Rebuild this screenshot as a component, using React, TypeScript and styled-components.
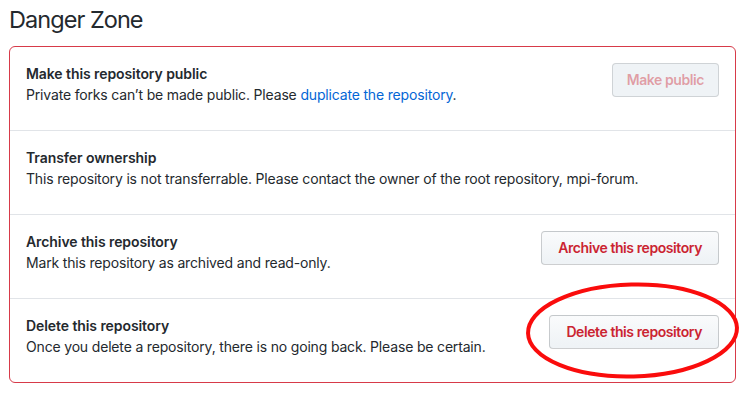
import React from "react";
import styled, { createGlobalStyle } from "styled-components";

const Global = createGlobalStyle`
  html, body { margin: 0; padding: 0; background: #fff; }
  body {
    font-family: Inter, "Liberation Sans", Arial, sans-serif;
    font-size: 14px;
    line-height: 1.5;
    color: #24292e;
  }
`;

const Page = styled.div`
  position: relative;
  width: 745px;
  height: 399px;
  box-sizing: border-box;
  padding: 5px 9px 0 9px;
  display: flex;
  flex-direction: column;
`;

const Heading = styled.h2`
  margin: 0 0 11px 0;
  font-size: 23.5px;
  line-height: 30px;
  font-weight: 400;
  letter-spacing: -0.95px;
  color: #24292e;
`;

const Box = styled.div`
  width: 727px;
  box-sizing: border-box;
  border: 1px solid #d73a49;
  border-radius: 6px;
  background: #fff;
`;

const Row = styled.div`
  display: flex;
  align-items: flex-start;
  padding: 16px 16px 15px 16px;
  & + & { border-top: 1px solid #e1e4e8; }
`;

const Info = styled.div`
  flex: 1 1 auto;
`;

const Title = styled.strong`
  display: block;
  font-weight: 600;
  line-height: 21px;
  letter-spacing: -0.08px;
`;

const Desc = styled.p`
  margin: 0 0 10px 0;
  line-height: 21px;
  letter-spacing: -0.17px;
`;

const Link = styled.a`
  color: #0366d6;
  text-decoration: none;
`;

const DangerButton = styled.button<{ $disabled?: boolean }>`
  flex: 0 0 auto;
  box-sizing: border-box;
  height: 34px;
  padding: 6px ${(p) => (p.$disabled ? "14px" : "16px")};
  font-family: inherit;
  font-size: 14px;
  font-weight: 600;
  line-height: 20px;
  letter-spacing: -0.42px;
  border-radius: 4px;
  border: 1px solid ${(p) => (p.$disabled ? "rgba(27,31,35,0.15)" : "rgba(27,31,35,0.2)")};
  color: ${(p) => (p.$disabled ? "rgba(203,36,49,0.42)" : "#cb2431")};
  background: ${(p) =>
    p.$disabled ? "#eff3f6" : "linear-gradient(-180deg, #fafbfc 0%, #eff3f6 90%)"};
  cursor: pointer;
  white-space: nowrap;
`;

const Circle = styled.svg`
  position: absolute;
  left: 0;
  top: 0;
  pointer-events: none;
`;

export default function App() {
  return (
    <>
      <Global />
      <Page>
        <Heading>Danger Zone</Heading>
        <Box>
          <Row>
            <Info>
              <Title>Make this repository public</Title>
              <Desc>
                Private forks can’t be made public. Please{" "}
                <Link href="#">duplicate the repository</Link>.
              </Desc>
            </Info>
            <DangerButton $disabled disabled>Make public</DangerButton>
          </Row>
          <Row>
            <Info>
              <Title>Transfer ownership</Title>
              <Desc>
                This repository is not transferrable. Please contact the owner of the root repository, mpi-forum.
              </Desc>
            </Info>
          </Row>
          <Row>
            <Info>
              <Title>Archive this repository</Title>
              <Desc>Mark this repository as archived and read-only.</Desc>
            </Info>
            <DangerButton>Archive this repository</DangerButton>
          </Row>
          <Row>
            <Info>
              <Title>Delete this repository</Title>
              <Desc>Once you delete a repository, there is no going back. Please be certain.</Desc>
            </Info>
            <DangerButton>Delete this repository</DangerButton>
          </Row>
        </Box>
        <Circle width="745" height="399" viewBox="0 0 745 399">
          <ellipse cx="632.5" cy="330.5" rx="104.5" ry="46" fill="none" stroke="#fa0c0c" strokeWidth="4" transform="rotate(-1.5 632.5 330.5)" />
        </Circle>
      </Page>
    </>
  );
}
